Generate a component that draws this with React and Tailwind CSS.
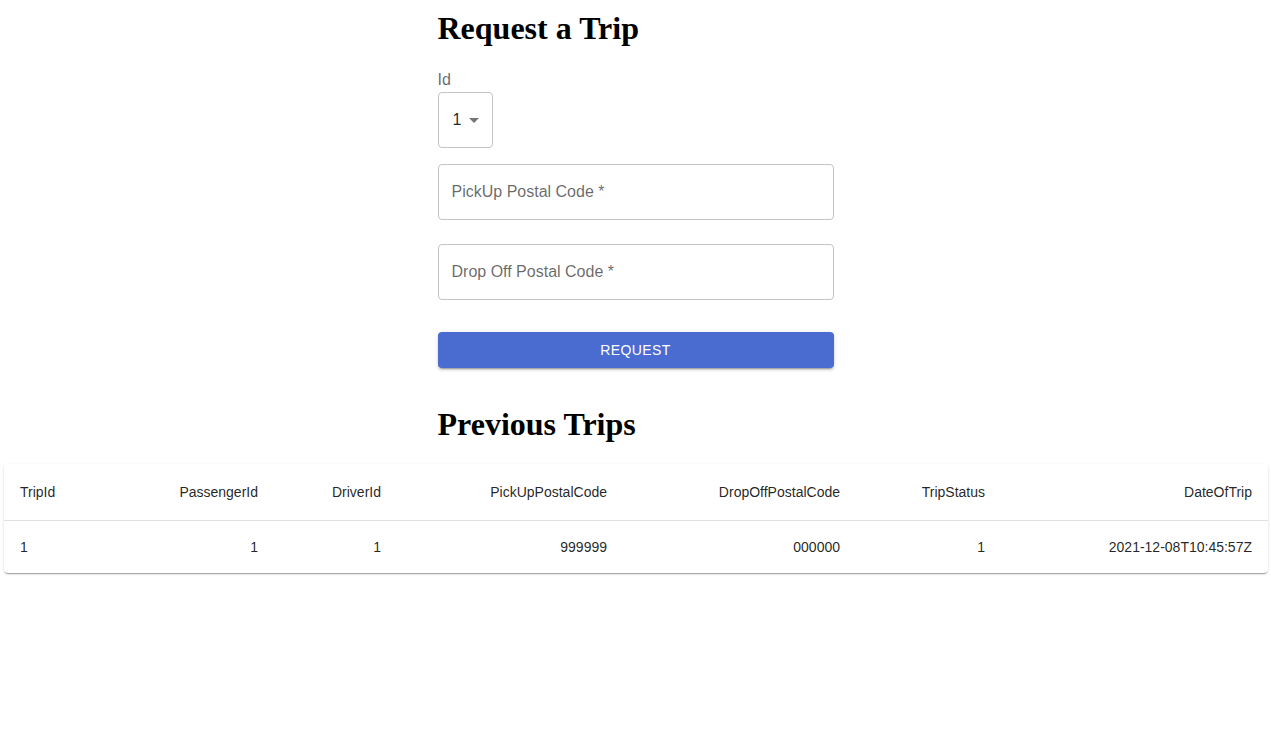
import React from 'react';

const columns = [
  { key: 'TripId', width: 'w-[118px]', align: 'text-left' },
  { key: 'PassengerId', width: 'w-[152px]', align: 'text-right' },
  { key: 'DriverId', width: 'w-[123px]', align: 'text-right' },
  { key: 'PickUpPostalCode', width: 'w-[226px]', align: 'text-right' },
  { key: 'DropOffPostalCode', width: 'w-[233px]', align: 'text-right' },
  { key: 'TripStatus', width: 'w-[145px]', align: 'text-right' },
  { key: 'DateOfTrip', width: 'w-[267px]', align: 'text-right' },
];

const trips = [
  {
    TripId: 1,
    PassengerId: 1,
    DriverId: 1,
    PickUpPostalCode: '999999',
    DropOffPostalCode: '000000',
    TripStatus: 1,
    DateOfTrip: '2021-12-08T10:45:57Z',
  },
];

const TextField = ({ label, className }) => (
  <div className={`flex h-[56px] w-full items-center rounded-[4px] border border-[#c4c4c4] px-[13px] ${className}`}>
    <span className="text-[16px] leading-[24px] text-[rgba(0,0,0,0.6)]">{label}</span>
  </div>
);

export default function App() {
  return (
    <div className="min-h-screen bg-white font-['Liberation_Sans',Arial,sans-serif]">
      {/* Request form */}
      <div className="mx-auto w-[396px] pt-[10px]">
        <h1 className="font-['Liberation_Serif','Times_New_Roman',serif] text-[32px] font-bold leading-[37px] text-black">
          Request a Trip
        </h1>

        <label className="mt-[21px] block text-[16px] leading-[24px] text-[rgba(0,0,0,0.6)]">Id</label>
        <div className="flex h-[56px] w-[55px] items-center rounded-[4px] border border-[#c4c4c4] pl-[14px]">
          <span className="text-[16px] leading-[24px] text-[rgba(0,0,0,0.87)]">1</span>
          <svg className="ml-[1px] h-6 w-6 text-[rgba(0,0,0,0.54)]" viewBox="0 0 24 24" fill="currentColor">
            <path d="M7 10l5 5 5-5z" />
          </svg>
        </div>

        <TextField label="PickUp Postal Code *" className="mt-4" />
        <TextField label="Drop Off Postal Code *" className="mt-6" />

        <button className="mt-8 flex h-9 w-full items-center justify-center rounded-[4px] bg-[#4a6bcf] text-[14px] font-medium uppercase tracking-[0.4px] text-white shadow-[0px_3px_1px_-2px_rgba(0,0,0,0.2),0px_2px_2px_0px_rgba(0,0,0,0.14),0px_1px_5px_0px_rgba(0,0,0,0.12)]">
          Request
        </button>

        <h1 className="mt-[38px] font-['Liberation_Serif','Times_New_Roman',serif] text-[32px] font-bold leading-[37px] text-black">
          Previous Trips
        </h1>
      </div>

      {/* Trips table */}
      <div className="ml-[4px] mt-[21px] w-[1264px] overflow-hidden rounded-[4px] bg-white shadow-[0px_2px_1px_-1px_rgba(0,0,0,0.2),0px_1px_1px_0px_rgba(0,0,0,0.14),0px_1px_3px_0px_rgba(0,0,0,0.12)]">
        <table className="w-full table-fixed border-collapse text-[14px] text-[rgba(0,0,0,0.87)]">
          <thead>
            <tr>
              {columns.map((c) => (
                <th key={c.key} className={`${c.width} ${c.align} border-b border-[#e0e0e0] p-4 font-normal leading-[24px]`}>
                  {c.key}
                </th>
              ))}
            </tr>
          </thead>
          <tbody>
            {trips.map((t) => (
              <tr key={t.TripId}>
                {columns.map((c) => (
                  <td key={c.key} className={`${c.align} p-4 leading-[20px]`}>
                    {t[c.key]}
                  </td>
                ))}
              </tr>
            ))}
          </tbody>
        </table>
      </div>
    </div>
  );
}
